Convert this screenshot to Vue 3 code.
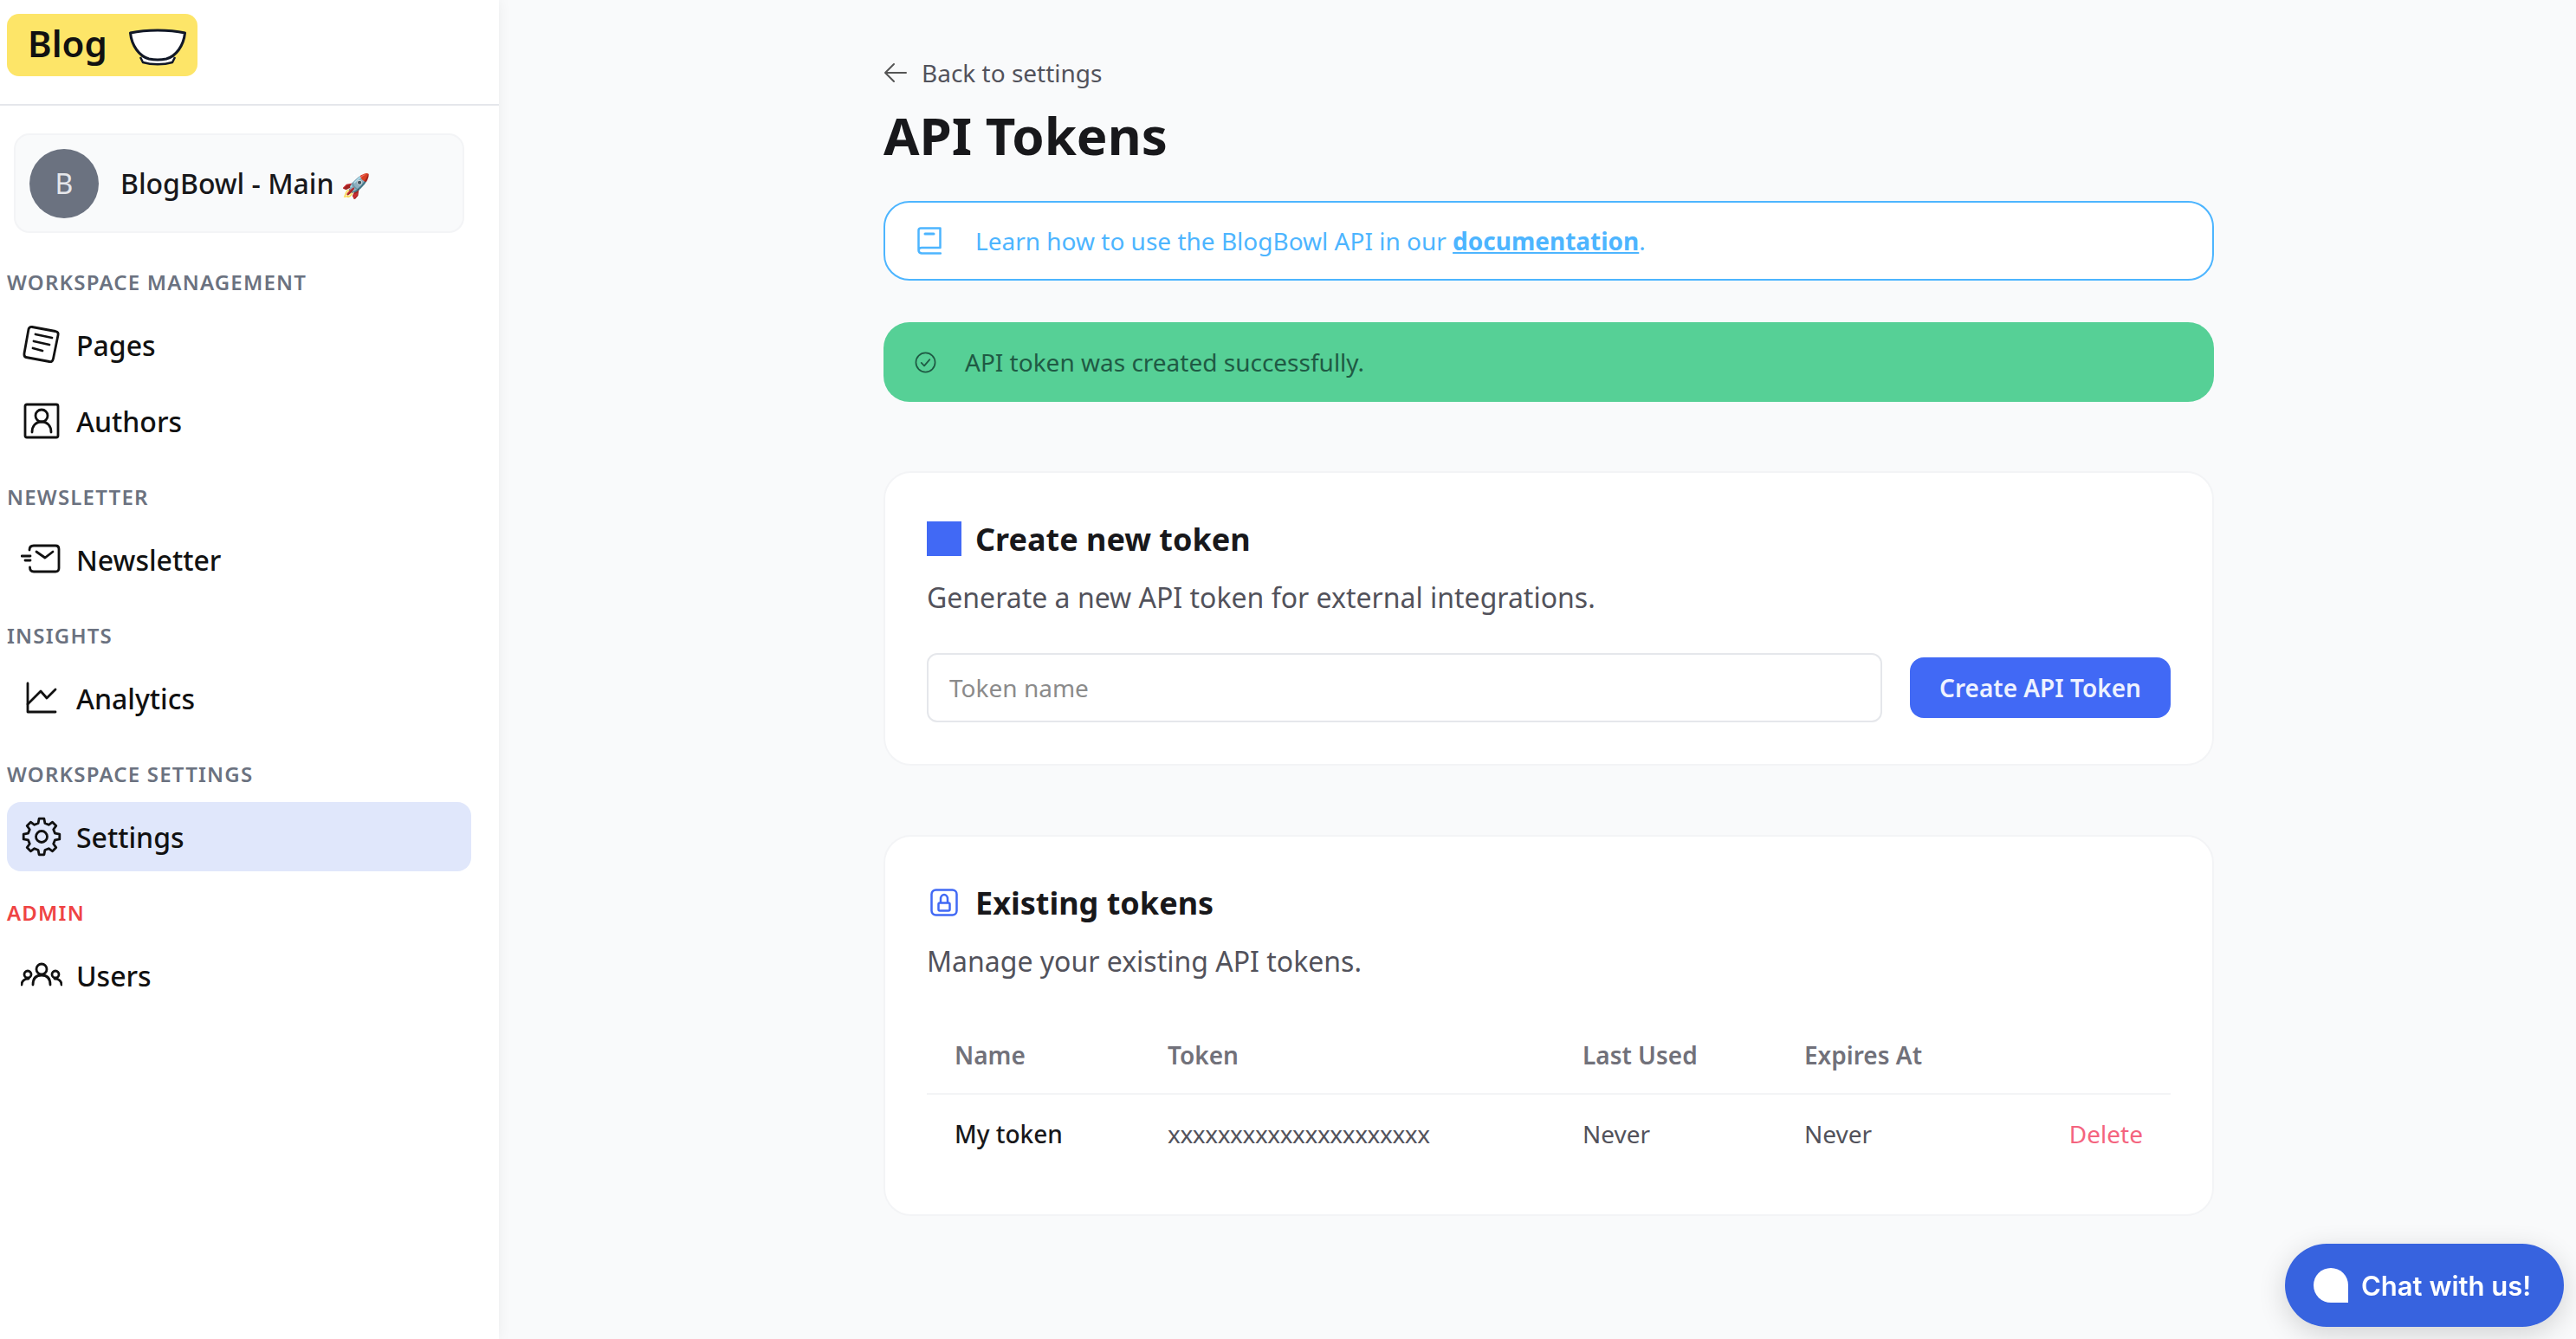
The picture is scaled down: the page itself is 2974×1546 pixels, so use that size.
<template>
  <div class="layout">
    <aside class="sidebar">
      <div class="logo-row">
        <div class="logo">
          <span class="logo-text">Blog</span>
          <svg class="bowl" viewBox="0 0 66 44" fill="none" stroke="#111827" stroke-width="3" stroke-linejoin="round">
            <path d="M13 33L16 39C26 42 40 42 50 39L53 33" fill="#fff" stroke-width="2.500" />
            <path d="M1.500 5C20 1 46 1 64.500 5C63 20 54 32 43 35C36 36.500 30 36.500 23 35C12 32 3 20 1.500 5Z" fill="#fff" />
          </svg>
        </div>
      </div>
      <div class="workspace">
        <div class="avatar">B</div>
        <span class="workspace-name">BlogBowl - Main <span class="emoji">🚀</span></span>
      </div>
      <nav class="nav">
        <template v-for="group in navGroups" :key="group.label">
          <div class="nav-label" :class="{ danger: group.danger }">{{ group.label }}</div>
          <a v-for="item in group.items" :key="item.name" class="nav-item" :class="{ active: item.active }">
            <svg class="nav-icon" viewBox="0 0 48 48" fill="none" stroke="#111" stroke-width="2.800" stroke-linecap="round" stroke-linejoin="round">
              <path v-for="(d, i) in item.paths" :key="i" :d="d" />
            </svg>
            <span>{{ item.name }}</span>
          </a>
        </template>
      </nav>
    </aside>

    <main class="main">
      <div class="content">
        <a class="back">
          <svg width="28" height="28" viewBox="0 0 28 28" fill="none" stroke="#555" stroke-width="2" stroke-linecap="round" stroke-linejoin="round">
            <path d="M26 14H3M12 4L2 14L12 24" />
          </svg>
          <span>Back to settings</span>
        </a>
        <h1 class="title">API Tokens</h1>

        <div class="info">
          <svg width="28" height="32" viewBox="0 0 28 32" fill="none" stroke="#4db5ff" stroke-width="2.500" stroke-linecap="round" stroke-linejoin="round">
            <path d="M1.500 27V4Q1.500 1.500 4 1.500H26.500V24H5Q1.500 24 1.500 27T5 30.500H27" />
            <path d="M9 8H19" stroke-width="3" />
          </svg>
          <span>Learn how to use the BlogBowl API in our <a class="doc-link">documentation</a>.</span>
        </div>

        <div class="success">
          <svg width="25" height="25" viewBox="0 0 26 26" fill="none" stroke="#1f5a44" stroke-width="1.800" stroke-linecap="round" stroke-linejoin="round">
            <circle cx="13" cy="13" r="11.500" />
            <path d="M8 13.500L11.500 17L18 9.500" />
          </svg>
          <span>API token was created successfully.</span>
        </div>

        <section class="card card-create">
          <div class="card-head">
            <span class="square"></span>
            <h2>Create new token</h2>
          </div>
          <p class="card-sub">Generate a new API token for external integrations.</p>
          <div class="create-row">
            <input class="token-input" placeholder="Token name" />
            <button class="create-btn">Create API Token</button>
          </div>
        </section>

        <section class="card card-existing">
          <div class="card-head">
            <span class="lock-box">
              <svg width="32" height="32" viewBox="0 0 32 32" fill="none" stroke="#4169f5" stroke-width="2.500">
                <rect x="1.500" y="1.500" width="29" height="29" rx="5" />
                <rect x="9.500" y="16.500" width="13" height="9" rx="1.500" />
                <path d="M12 16.500V12C12 9 14 7 16 7S20 9 20 12V16.500" />
              </svg>
            </span>
            <h2>Existing tokens</h2>
          </div>
          <p class="card-sub">Manage your existing API tokens.</p>
          <table class="tokens">
            <colgroup>
              <col class="col-name" />
              <col class="col-token" />
              <col class="col-used" />
              <col class="col-expires" />
              <col />
            </colgroup>
            <thead>
              <tr>
                <th>Name</th>
                <th>Token</th>
                <th>Last Used</th>
                <th>Expires At</th>
                <th></th>
              </tr>
            </thead>
            <tbody>
              <tr v-for="token in tokens" :key="token.name">
                <td class="token-name">{{ token.name }}</td>
                <td class="token-value">{{ token.value }}</td>
                <td>{{ token.lastUsed }}</td>
                <td>{{ token.expires }}</td>
                <td class="delete-cell"><a class="delete">Delete</a></td>
              </tr>
            </tbody>
          </table>
        </section>
      </div>
    </main>

    <button class="chat">
      <span class="chat-icon"></span>
      <span>Chat with us!</span>
    </button>
  </div>
</template>

<script setup>
// 8 teeth gear outline for the settings icon
function gearPath(cx, cy, outer, inner) {
  let points = []
  for (let k = 0; k < 8; k++) {
    let a = k * 45 - 90
    let offsets = [[inner, -14], [outer, -8], [outer, 8], [inner, 14]]
    offsets.forEach(([r, o]) => {
      let rad = ((a + o) * Math.PI) / 180
      points.push((cx + r * Math.cos(rad)).toFixed(1) + ' ' + (cy + r * Math.sin(rad)).toFixed(1))
    })
  }
  return 'M' + points.join('L') + 'Z'
}

const navGroups = [
  {
    label: 'WORKSPACE MANAGEMENT',
    items: [
      {
        name: 'Pages',
        paths: [
          'M13 3.500L40 8.500Q44 9.500 43 13L37.500 40Q36.500 44.500 33 43.500L6 38.500Q3.500 38 4 34L9 6Q10 3 13 3.500Z',
          'M17 12L36 16',
          'M15 20L33 24',
          'M14 28L25 31',
        ],
      },
      {
        name: 'Authors',
        paths: [
          'M7 5H41Q43 5 43 7V41Q43 43 41 43H7Q5 43 5 41V7Q5 5 7 5Z',
          'M24 11A7 7 0 1 0 24 25A7 7 0 1 0 24 11Z',
          'M13 37C13 30 17 25 24 25S35 30 35 37',
        ],
      },
    ],
  },
  {
    label: 'NEWSLETTER',
    items: [
      {
        name: 'Newsletter',
        paths: [
          'M10 13Q10 8 15 8H40Q44 8 44 12V34Q44 38 40 38H15Q10.500 38 10.500 33',
          'M18 15L28 22L37 15',
          'M1 20H11',
          'M5 25H11',
        ],
      },
    ],
  },
  {
    label: 'INSIGHTS',
    items: [
      {
        name: 'Analytics',
        paths: ['M8 7V40H40', 'M8 31L23 16L30 24L40 14'],
      },
    ],
  },
  {
    label: 'WORKSPACE SETTINGS',
    items: [
      {
        name: 'Settings',
        active: true,
        paths: [
          gearPath(24, 24, 21, 16),
          'M24 17.500A6.500 6.500 0 1 0 24 30.500A6.500 6.500 0 1 0 24 17.500Z',
        ],
      },
    ],
  },
  {
    label: 'ADMIN',
    danger: true,
    items: [
      {
        name: 'Users',
        paths: [
          'M24 11A6 6 0 1 0 24 23A6 6 0 1 0 24 11Z',
          'M14 35C14 27 18 24 24 24S34 27 34 35',
          'M8 19A4 4 0 1 0 8 27A4 4 0 1 0 8 19Z',
          'M1 35C1 31 4 28 9 28',
          'M40 19A4 4 0 1 1 40 27A4 4 0 1 1 40 19Z',
          'M47 35C47 31 44 28 39 28',
        ],
      },
    ],
  },
]

const tokens = [
  { name: 'My token', value: 'xxxxxxxxxxxxxxxxxxxxx', lastUsed: 'Never', expires: 'Never' },
]
</script>

<style>
html,
body {
  margin: 0;
  background: #f9fafb;
}
</style>

<style scoped>
.layout {
  display: flex;
  min-height: 1546px;
  font-family: "Noto Sans", "Liberation Sans", sans-serif;
  color: #18181b;
  background: #f9fafb;
  overflow: hidden;
}

.sidebar {
  width: 576px;
  flex-shrink: 0;
  background: #fff;
  box-shadow: 0 0 16px rgba(17, 24, 39, 0.06);
}

.logo-row {
  height: 122px;
  padding: 16px 8px 0;
  box-sizing: border-box;
  border-bottom: 2px solid #e5e7eb;
}

.logo {
  width: 220px;
  height: 72px;
  box-sizing: border-box;
  display: flex;
  align-items: center;
  justify-content: space-between;
  padding: 0 13px 0 24px;
  border-radius: 14px;
  background: #fde568;
}

.logo-text {
  font-size: 42px;
  font-weight: 600;
  color: #111;
  margin-bottom: 6px;
}

.bowl {
  width: 66px;
  height: 44px;
  margin-top: 6px;
}

.workspace {
  margin: 32px 40px 0 16px;
  height: 115px;
  box-sizing: border-box;
  display: flex;
  align-items: center;
  padding-left: 16px;
  gap: 25px;
  border: 2px solid #f3f4f6;
  border-radius: 18px;
  background: #f9fafb;
}

.avatar {
  width: 80px;
  height: 80px;
  border-radius: 50%;
  display: flex;
  align-items: center;
  justify-content: center;
  background: #6b7280;
  color: #e5e7eb;
  font-size: 32px;
}

.workspace-name {
  font-size: 32px;
  font-weight: 500;
  color: #18181b;
}

.emoji {
  font-size: 27px;
}

.nav {
  margin-top: 41px;
  padding: 0 32px 0 8px;
}

.nav-label {
  height: 32px;
  line-height: 32px;
  margin-top: 32px;
  margin-bottom: 16px;
  font-size: 24px;
  font-weight: 600;
  letter-spacing: 1.2px;
  color: #6b7280;
}

.nav-label.danger {
  color: #ef4444;
}

.nav-item {
  height: 80px;
  display: flex;
  align-items: center;
  gap: 16px;
  padding-left: 16px;
  margin-bottom: 8px;
  border-radius: 16px;
  font-size: 32px;
  font-weight: 500;
  color: #111;
}

.nav-item.active {
  background: #e0e7fb;
}

.nav-icon {
  width: 48px;
  height: 48px;
  flex-shrink: 0;
}

.main {
  flex: 1;
  padding: 59px 0 0 444px;
}

.content {
  width: 1536px;
}

.back {
  display: flex;
  align-items: center;
  gap: 16px;
  height: 50px;
  font-size: 28px;
  color: #52525b;
}

.title {
  margin: 10px 0 0;
  font-size: 60px;
  line-height: 74px;
  font-weight: 700;
  color: #18181b;
}

.info,
.success {
  display: flex;
  align-items: center;
  box-sizing: border-box;
  height: 92px;
  border-radius: 30px;
  font-size: 28px;
}

.info {
  margin-top: 39px;
  gap: 39px;
  padding-left: 37px;
  background: #fff;
  border: 2px solid #4db5ff;
  color: #4db5ff;
}

.doc-link {
  font-weight: 700;
  text-decoration: underline;
}

.success {
  margin-top: 48px;
  gap: 33px;
  padding-left: 36px;
  background: #56d096;
  color: #1f5a44;
}

.card {
  box-sizing: border-box;
  background: #fff;
  border: 2px solid #f3f4f6;
  border-radius: 32px;
  padding: 56px 48px 0;
}

.card-create {
  margin-top: 80px;
  height: 340px;
}

.card-existing {
  margin-top: 80px;
  height: 440px;
}

.card-head {
  display: flex;
  align-items: center;
  gap: 16px;
  height: 40px;
}

.card-head h2 {
  margin: 0;
  font-size: 36px;
  font-weight: 700;
  color: #18181b;
}

.square {
  width: 40px;
  height: 40px;
  background: #4169f5;
}

.lock-box {
  width: 40px;
  height: 40px;
  display: flex;
  align-items: center;
  justify-content: center;
}

.card-sub {
  margin: 26px 0 0;
  font-size: 32px;
  line-height: 44px;
  color: #52525b;
}

.create-row {
  display: flex;
  align-items: center;
  gap: 32px;
  margin-top: 42px;
}

.token-input {
  flex: 1;
  height: 80px;
  box-sizing: border-box;
  padding: 0 24px;
  border: 2px solid #e5e7eb;
  border-radius: 12px;
  font-family: inherit;
  font-size: 28px;
  outline: none;
}

.token-input::placeholder {
  color: #8b8b8b;
}

.create-btn {
  width: 301px;
  height: 70px;
  border: none;
  border-radius: 16px;
  background: #4169f5;
  color: #eef2ff;
  font-family: inherit;
  font-size: 28px;
  font-weight: 600;
}

.tokens {
  width: 100%;
  margin-top: 42px;
  border-collapse: collapse;
  table-layout: fixed;
  font-size: 28px;
  color: #52525b;
}

.col-name {
  width: 246px;
}

.col-token {
  width: 479px;
}

.col-used {
  width: 256px;
}

.col-expires {
  width: 256px;
}

.tokens th {
  height: 88px;
  padding: 0 32px;
  text-align: left;
  font-weight: 600;
  color: #71717a;
  border-bottom: 2px solid #f3f4f6;
}

.tokens td {
  height: 90px;
  padding: 0 32px;
}

.tokens .token-name {
  color: #18181b;
  font-weight: 500;
}

.tokens .token-value {
  letter-spacing: -0.4px;
}

.delete-cell {
  text-align: right;
}

.delete {
  color: #f4647f;
}

.chat {
  position: fixed;
  left: 2638px;
  top: 1436px;
  width: 322px;
  height: 96px;
  display: flex;
  align-items: center;
  gap: 15px;
  padding: 0 0 0 33px;
  box-sizing: border-box;
  border: none;
  border-radius: 48px;
  background: #3763df;
  color: #fff;
  font-family: Inter, "Noto Sans", sans-serif;
  font-size: 31px;
  font-weight: 600;
  box-shadow: 0 8px 32px rgba(0, 0, 0, 0.16);
}

.chat-icon {
  width: 40px;
  height: 40px;
  background: #fff;
  border-radius: 50% 50% 0 50%;
}
</style>
